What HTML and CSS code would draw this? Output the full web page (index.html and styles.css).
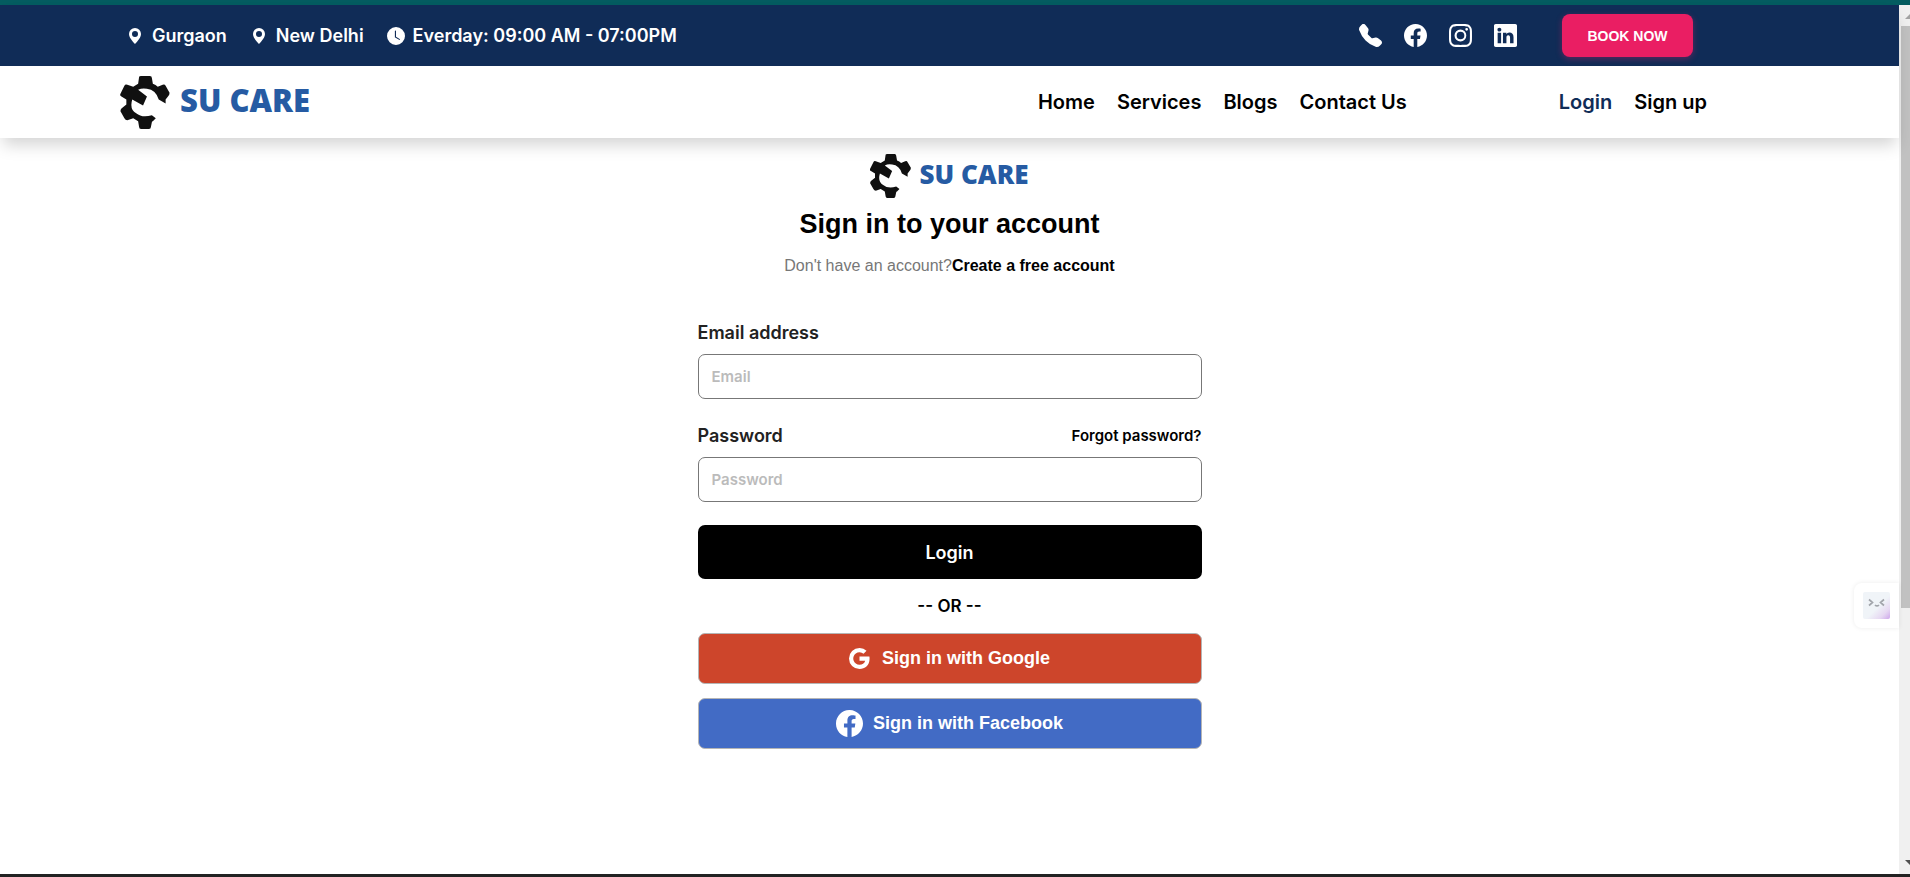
FILE: index.html
```html
<!DOCTYPE html>
<html lang="en">
<head>
<meta charset="utf-8">
<title>SU Care - Sign in</title>
<link rel="stylesheet" href="styles.css">
</head>
<body>
<svg class="sprite" aria-hidden="true">
  <symbol id="gear" viewBox="0 0 50 54">
    <path fill="#101010" d="M19 1Q19 0 21 0H30Q32 0 32 2L33 8Q36 9 38 11L43 9Q45 8 46 10L50 17Q50 19 49 20L46 24V28L39 24Q36 14 27 13Q22 12 18 14L27 21L23 30L12 24Q9 34 16 38Q22 43 32 40L36 43L33 46Q32 46 32 47L31 52Q31 54 29 54H21Q19 54 19 52L18 46L13 43L7 45Q5 45 4 43L0 36Q0 34 1 33L6 29V24L1 21Q-1 20 0 18L4 10Q5 8 7 9L13 11L18 8Z"/>
  </symbol>
  <symbol id="pin" viewBox="0 0 16 16"><path d="M8 16s6-5.686 6-10A6 6 0 0 0 2 6c0 4.314 6 10 6 10m0-7a3 3 0 1 1 0-6 3 3 0 0 1 0 6"/></symbol>
  <symbol id="facebook" viewBox="0 0 16 16"><path d="M16 8.049c0-4.446-3.582-8.05-8-8.05C3.58 0-.002 3.603-.002 8.05c0 4.017 2.926 7.347 6.75 7.951v-5.625h-2.03V8.05H6.75V6.275c0-2.017 1.195-3.131 3.022-3.131.876 0 1.791.157 1.791.157v1.98h-1.009c-.993 0-1.303.621-1.303 1.258v1.51h2.218l-.354 2.326H9.25V16c3.824-.604 6.75-3.934 6.75-7.951"/></symbol>
</svg>
<div class="frame">
  <div class="page">
    <header class="header">
      <div class="topbar">
        <ul class="info">
          <li><svg class="icon-pin"><use href="#pin"/></svg>Gurgaon</li>
          <li><svg class="icon-pin"><use href="#pin"/></svg>New Delhi</li>
          <li><svg class="icon-clock" viewBox="0 0 16 16"><path d="M16 8A8 8 0 1 1 0 8a8 8 0 0 1 16 0M8 3.5a.5.5 0 0 0-1 0V9a.5.5 0 0 0 .252.434l3.5 2a.5.5 0 0 0 .496-.868L8 8.71z"/></svg>Everday: 09:00 AM - 07:00PM</li>
        </ul>
        <div class="contact">
          <a href="#" aria-label="Phone"><svg viewBox="0 0 16 16"><path d="M1.885.511a1.745 1.745 0 0 1 2.61.163L6.29 2.98c.329.423.445.974.315 1.494l-.547 2.19a.68.68 0 0 0 .178.643l2.457 2.457a.68.68 0 0 0 .644.178l2.189-.547a1.75 1.75 0 0 1 1.494.315l2.306 1.794c.829.645.905 1.87.163 2.611l-1.034 1.034c-.74.74-1.846 1.065-2.877.702a18.6 18.6 0 0 1-7.01-4.42 18.6 18.6 0 0 1-4.42-7.009c-.362-1.03-.037-2.137.703-2.877z"/></svg></a>
          <a href="#" aria-label="Facebook"><svg><use href="#facebook"/></svg></a>
          <a href="#" aria-label="Instagram"><svg viewBox="0 0 16 16"><path d="M8 0C5.829 0 5.556.01 4.703.048 3.85.088 3.269.222 2.76.42a3.9 3.9 0 0 0-1.417.923A3.9 3.9 0 0 0 .42 2.76C.222 3.268.087 3.85.048 4.7.01 5.555 0 5.827 0 8.001c0 2.172.01 2.444.048 3.297.04.852.174 1.433.372 1.942.205.526.478.972.923 1.417.444.445.89.719 1.416.923.51.198 1.09.333 1.942.372C5.555 15.99 5.827 16 8 16s2.444-.01 3.298-.048c.851-.04 1.434-.174 1.943-.372a3.9 3.9 0 0 0 1.416-.923c.445-.445.718-.891.923-1.417.197-.509.332-1.09.372-1.942C15.99 10.445 16 10.173 16 8s-.01-2.445-.048-3.299c-.04-.851-.175-1.433-.372-1.941a3.9 3.9 0 0 0-.923-1.417A3.9 3.9 0 0 0 13.24.42c-.51-.198-1.092-.333-1.943-.372C10.443.01 10.172 0 7.998 0zm-.717 1.442h.718c2.136 0 2.389.007 3.232.046.78.035 1.204.166 1.486.275.373.145.64.319.92.599s.453.546.598.92c.11.281.24.705.275 1.485.039.843.047 1.096.047 3.231s-.008 2.389-.047 3.232c-.035.78-.166 1.203-.275 1.485a2.5 2.5 0 0 1-.599.919c-.28.28-.546.453-.92.598-.28.11-.704.24-1.485.276-.843.038-1.096.047-3.232.047s-2.39-.009-3.233-.047c-.78-.036-1.203-.166-1.485-.276a2.5 2.5 0 0 1-.92-.598 2.5 2.5 0 0 1-.6-.92c-.109-.281-.24-.705-.275-1.485-.038-.843-.046-1.096-.046-3.233s.008-2.388.046-3.231c.036-.78.166-1.204.276-1.486.145-.373.319-.64.599-.92s.546-.453.92-.598c.282-.11.705-.24 1.485-.276.738-.034 1.024-.044 2.515-.045zm4.988 1.328a.96.96 0 1 0 0 1.92.96.96 0 0 0 0-1.92m-4.27 1.122a4.109 4.109 0 1 0 0 8.217 4.109 4.109 0 0 0 0-8.217m0 1.441a2.667 2.667 0 1 1 0 5.334 2.667 2.667 0 0 1 0-5.334"/></svg></a>
          <a href="#" aria-label="LinkedIn"><svg viewBox="0 0 16 16"><path d="M0 1.146C0 .513.526 0 1.175 0h13.65C15.474 0 16 .513 16 1.146v13.708c0 .633-.526 1.146-1.175 1.146H1.175C.526 16 0 15.487 0 14.854zm4.943 12.248V6.169H2.542v7.225zm-1.2-8.212c.837 0 1.358-.554 1.358-1.248-.015-.709-.52-1.248-1.342-1.248S2.4 3.226 2.4 3.934c0 .694.521 1.248 1.327 1.248zm4.908 8.212V9.359c0-.216.016-.432.08-.586.173-.431.568-.878 1.232-.878.869 0 1.216.662 1.216 1.634v3.865h2.401V9.25c0-2.22-1.184-3.252-2.764-3.252-1.274 0-1.845.7-2.165 1.193v.025h-.016l.016-.025V6.169h-2.4c.03.678 0 7.225 0 7.225z"/></svg></a>
          <button type="button" class="book">BOOK NOW</button>
        </div>
      </div>
      <nav class="nav">
        <a href="#" class="logo"><svg class="logo-gear"><use href="#gear"/></svg><span>SU CARE</span></a>
        <div class="menu">
          <a href="#">Home</a>
          <a href="#">Services</a>
          <a href="#">Blogs</a>
          <a href="#">Contact Us</a>
        </div>
        <div class="account">
          <a href="#" class="active">Login</a>
          <a href="#">Sign up</a>
        </div>
      </nav>
    </header>
    <main class="signin">
      <div class="logo logo-small"><svg class="logo-gear"><use href="#gear"/></svg><span>SU CARE</span></div>
      <h1>Sign in to your account</h1>
      <p class="hint">Don't have an account?<a href="#">Create a free account</a></p>
      <form class="form">
        <div class="row"><label for="email">Email address</label></div>
        <input id="email" type="email" placeholder="Email">
        <div class="row"><label for="password">Password</label><a href="#">Forgot password?</a></div>
        <input id="password" type="password" placeholder="Password">
        <button type="submit" class="login">Login</button>
        <p class="or">-- OR --</p>
        <button type="button" class="social google"><svg viewBox="0 0 16 16"><path d="M15.545 6.558a9.4 9.4 0 0 1 .139 1.626c0 2.434-.87 4.492-2.384 5.885h.002C11.978 15.292 10.158 16 8 16A8 8 0 1 1 8 0a7.7 7.7 0 0 1 5.352 2.082l-2.284 2.284A4.35 4.35 0 0 0 8 3.166c-2.087 0-3.86 1.408-4.492 3.304a4.8 4.8 0 0 0 0 3.063h.003c.635 1.893 2.405 3.301 4.492 3.301 1.078 0 2.004-.276 2.722-.764h-.003a3.7 3.7 0 0 0 1.599-2.431H8v-3.08z"/></svg>Sign in with Google</button>
        <button type="button" class="social fb"><svg><use href="#facebook"/></svg>Sign in with Facebook</button>
      </form>
    </main>
    <button type="button" class="assistant" aria-label="Assistant">
      <svg viewBox="0 0 27 27">
        <defs><linearGradient id="tint" x1="0" y1="0" x2="1" y2="1"><stop offset=".55" stop-color="#f0f4f8"/><stop offset=".8" stop-color="#e6d8f2"/><stop offset="1" stop-color="#cda6ea"/></linearGradient></defs>
        <rect width="27" height="27" rx="2" fill="url(#tint)"/>
        <path d="M6 7.500l3.500 3-3.500 3M21 7.500l-3.500 3 3.500 3M12 13q2 2 4 0" fill="none" stroke="#a2a5ab" stroke-width="1.700"/>
      </svg>
    </button>
  </div>
  <div class="scrollbar" aria-hidden="true">
    <svg viewBox="0 0 11 21"><path d="M6 14l5-5v5z" fill="#a3a3a3"/></svg>
    <div class="thumb"></div>
    <svg viewBox="0 0 11 16"><path d="M6 2h5v5z" fill="#505050"/></svg>
  </div>
</div>
</body>
</html>
```
FILE: styles.css
```css
* { box-sizing: border-box; }
body { margin: 0; font-family: Inter, "Liberation Sans", sans-serif; color: #000; background: #fff; }
a { color: inherit; text-decoration: none; }
svg { display: block; fill: currentColor; flex: none; }
button, input { font: inherit; }
.sprite { position: absolute; width: 0; height: 0; }

.frame {
  display: grid;
  grid-template-columns: 1fr 11px;
  min-height: 100vh;
  border-top: 5px solid #045c60;
  border-bottom: 3px solid #222;
}
.page { position: relative; }
.header { box-shadow: 0 10px 15px -3px rgba(0, 0, 0, .17); }

.topbar {
  display: flex;
  justify-content: space-between;
  align-items: center;
  height: 61px;
  padding: 0 206px 0 126px;
  background: #102c57;
  color: #fff;
}
.info {
  display: flex;
  gap: 23px;
  margin: 0;
  padding: 0;
  list-style: none;
  font-size: 18px;
  font-weight: 600;
}
.info li { display: flex; align-items: center; gap: 8px; }
.icon-pin { width: 18px; height: 16px; }
.icon-clock { width: 18px; height: 18px; }
.contact { display: flex; align-items: center; gap: 22px; }
.contact svg { width: 23px; height: 23px; }
.book {
  width: 131px;
  height: 43px;
  margin-left: 23px;
  padding: 0;
  border: 0;
  border-radius: 8px;
  background: #ea1e63;
  color: #fff;
  box-shadow: 0 2px 6px rgba(234, 30, 99, .35);
  font: bold 14px "Liberation Sans", Arial, sans-serif;
}

.nav {
  display: flex;
  align-items: center;
  height: 72px;
  padding: 0 192px 0 120px;
  background: #fff;
  font-size: 20px;
  font-weight: 600;
}
.menu, .account { display: flex; gap: 22px; }
.menu { margin-left: auto; }
.account { margin-left: 152px; }
.active { color: #102c57; }

.logo {
  display: flex;
  align-items: center;
  gap: 10px;
  color: #265ba3;
  font: 800 31px "Open Sans", sans-serif;
}
.logo span { padding-bottom: 4px; }
.logo-gear { width: 50px; height: 53px; }
.logo-small { gap: 8px; font-size: 26px; line-height: 32px; }
.logo-small .logo-gear { width: 41px; height: 44px; }

.signin {
  display: flex;
  flex-direction: column;
  align-items: center;
  padding: 16px 24px 96px;
}
h1 { margin: 10px 0 0; font: bold 27px/32px "Liberation Sans", Arial, sans-serif; }
.hint { margin: 14px 0 0; font: 16px/24px "Liberation Sans", Arial, sans-serif; color: #777; }
.hint a { color: #000; font-weight: bold; }
.form { display: flex; flex-direction: column; width: 100%; max-width: 504px; margin-top: 41px; }
.row {
  display: flex;
  justify-content: space-between;
  align-items: center;
  height: 27px;
  margin-bottom: 8px;
  font-weight: 600;
  font-size: 18px;
  color: #222;
}
.row a { font-size: 15px; color: #000; }
input {
  height: 45px;
  margin-bottom: 23px;
  padding: 0 13px;
  border: 1px solid #777;
  border-radius: 7px;
  font-size: 15px;
  font-weight: 600;
}
input::placeholder { color: #bbb; }
.login {
  height: 54px;
  border: 0;
  border-radius: 7px;
  background: #000;
  color: #fff;
  font-size: 18px;
  font-weight: 600;
}
.or { margin: 14px 0; font-size: 17px; line-height: 26px; font-weight: 600; text-align: center; }
.social {
  display: flex;
  align-items: center;
  justify-content: center;
  gap: 10px;
  height: 51px;
  margin-bottom: 14px;
  border: 1px solid #b5b5b5;
  border-radius: 7px;
  color: #fff;
  font: bold 18px "Liberation Sans", Arial, sans-serif;
}
.google { gap: 12px; background: #cd452b; }
.google svg { width: 21px; height: 21px; }
.fb { background: #426bc5; }
.fb svg { width: 27px; height: 27px; }

.assistant {
  position: absolute;
  right: 0;
  bottom: 246px;
  padding: 9px;
  border: 0;
  border-radius: 8px 0 0 8px;
  background: #fff;
  box-shadow: 0 0 5px rgba(0, 0, 0, .08);
}
.assistant svg { width: 27px; height: 27px; }

.scrollbar { display: flex; flex-direction: column; background: #f0f0f0; }
.scrollbar svg { width: 11px; }
.scrollbar svg:first-child { height: 21px; }
.scrollbar svg:last-child { height: 16px; margin-top: auto; }
.thumb { height: 67%; margin-left: 2px; background: #c1c1c1; }
```
